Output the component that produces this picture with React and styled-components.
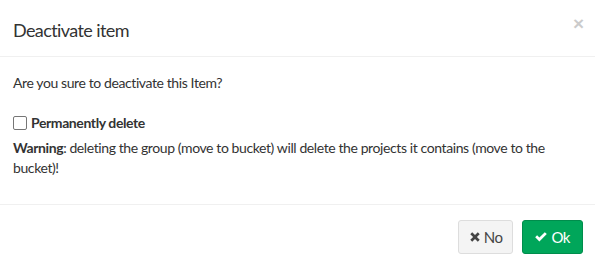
import React from "react";
import styled, { createGlobalStyle } from "styled-components";

const GlobalStyle = createGlobalStyle`
  html, body {
    margin: 0;
    padding: 0;
    background: #fff;
  }
  body {
    font-family: "Lato", "Liberation Sans", sans-serif;
    font-size: 14px;
    letter-spacing: -0.4px;
    color: #333;
  }
`;

const Modal = styled.div`
  width: 595px;
  background: #fff;
`;

const Header = styled.div`
  display: flex;
  align-items: flex-start;
  justify-content: space-between;
  padding: 15px 11px 15px 13px;
  border-bottom: 1px solid #f0f0f0;
`;

const Title = styled.h4`
  margin: 4px 0 0;
  font-size: 18px;
  font-weight: 400;
  letter-spacing: -0.6px;
  line-height: 22px;
  color: #333;
`;

const Close = styled.button`
  border: 0;
  background: transparent;
  padding: 0;
  margin: 2px 0 0 0;
  font-family: "Liberation Sans", sans-serif;
  font-size: 19px;
  font-weight: 700;
  line-height: 14px;
  color: #000;
  opacity: 0.2;
  cursor: pointer;
`;

const Body = styled.div`
  padding: 16px 13px 15px;
  line-height: 20px;
`;

const Text = styled.p`
  margin: 0 0 ${(p) => p.$gap || 0}px;
`;

const CheckLabel = styled.label`
  display: flex;
  align-items: center;
  gap: 4px;
  font-weight: 700;
  margin-bottom: 5px;
`;

const Box = styled.span`
  width: 12px;
  height: 12px;
  border: 1px solid #767676;
  border-radius: 2px;
  background: #fff;
`;

const Footer = styled.div`
  display: flex;
  justify-content: flex-end;
  gap: 9px;
  padding: 15px 12px 15px;
  border-top: 1px solid #f0f0f0;
`;

const Button = styled.button`
  display: flex;
  align-items: center;
  gap: ${(p) => (p.$primary ? 5 : 4)}px;
  height: 34px;
  padding: 0 ${(p) => (p.$primary ? 12 : 9)}px 0 ${(p) => (p.$primary ? 12 : 11)}px;
  font-family: inherit;
  font-size: 15px;
  letter-spacing: -0.5px;
  border-radius: 3px;
  border: 1px solid ${(p) => (p.$primary ? "#008d4c" : "#ddd")};
  background: ${(p) => (p.$primary ? "#00a65a" : "#f4f4f4")};
  color: ${(p) => (p.$primary ? "#fff" : "#444")};
`;

const Icon = styled.svg`
  width: ${(p) => p.$w}px;
  height: 10px;
  fill: currentColor;
`;

export default function App() {
  return (
    <>
      <GlobalStyle />
      <Modal>
        <Header>
          <Title>Deactivate item</Title>
          <Close>×</Close>
        </Header>
        <Body>
          <Text $gap={20}>Are you sure to deactivate this Item?</Text>
          <CheckLabel>
            <Box />
            Permanently delete
          </CheckLabel>
          <Text $gap={11}>
            <b>Warning</b>: deleting the group (move to bucket) will delete the
            projects it contains (move to the bucket)!
          </Text>
        </Body>
        <Footer>
          <Button>
            <Icon $w={10} viewBox="0 0 10 10">
              <path d="M0.3 2.2 2.2 0.3 5 3.1 7.8 0.3 9.7 2.2 6.9 5 9.7 7.8 7.8 9.7 5 6.9 2.2 9.7 0.3 7.8 3.1 5Z" />
            </Icon>
            No
          </Button>
          <Button $primary>
            <Icon $w={12} viewBox="0 0 12 10">
              <path d="M0.2 5.2 2.1 3.3 4.4 5.6 9.8 0.2 11.8 2.1 4.4 9.5Z" />
            </Icon>
            Ok
          </Button>
        </Footer>
      </Modal>
    </>
  );
}
